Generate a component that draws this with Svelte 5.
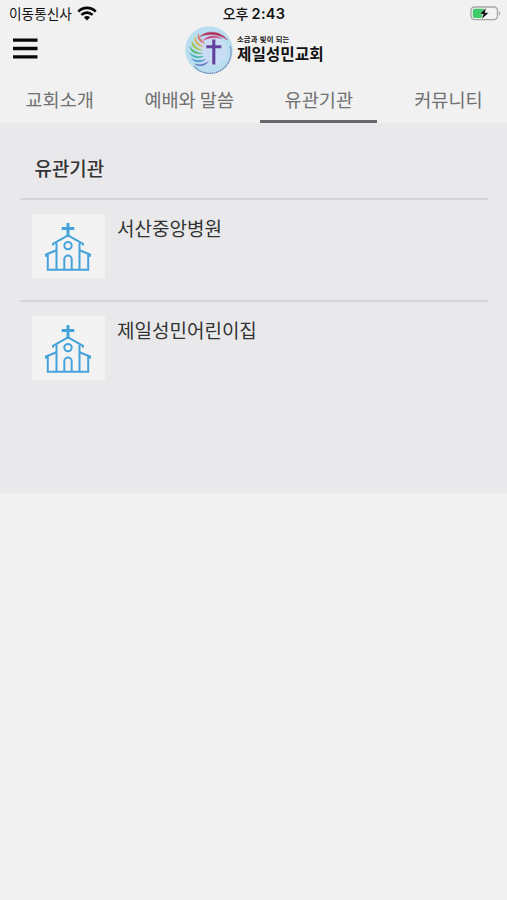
<script>
  const tabs = ['교회소개', '예배와 말씀', '유관기관', '커뮤니티'];
  const active = '유관기관';
  const places = ['서산중앙병원', '제일성민어린이집'];
  const rays = [
    { c: '#b52f5c', d: 'M15 10.500C22 4 35 4.500 42.500 14 34 8 24 7 15 10.500z' },
    { c: '#cf4a86', d: 'M18 14.500C23 9 31 9 36.500 12.500 30 11 24 11.500 18 14.500z' },
    { c: '#d9756a', d: 'M13.500 7.500C11.500 12 14 16 20 17.500 16 14 14 11.500 13.500 7.500z' },
    { c: '#dfae4c', d: 'M10 11C8.500 16 12 20 18.500 21 13.500 18 11 15 10 11z' },
    { c: '#a3c653', d: 'M7 15C6 20.500 10 24 17.500 24.500 11.500 22 8.500 19 7 15z' },
    { c: '#4fb56c', d: 'M5 20.500C5.500 26 10 28.500 17.500 27.500 11 26.500 7.500 24.500 5 20.500z' },
    { c: '#3aaea2', d: 'M4.500 26.500C6.500 31.500 12 33 18.500 30.500 12 31 8 30 4.500 26.500z' },
    { c: '#4590cb', d: 'M6.500 32.500C9.500 36.500 15.500 37 20.500 33.500 15 35 10.500 35 6.500 32.500z' },
    { c: '#5c6bb8', d: 'M10 38C14 41 20 40 23.500 35.500 19 38.500 14.500 39.500 10 38z' }
  ];
</script>

<div class="screen">
  <div class="status">
    <div class="carrier">
      <span>이동통신사</span>
      <svg width="20" height="15" viewBox="0 0 20 15">
        <g fill="none" stroke="#080808" stroke-width="2.700">
          <path d="M1.300 5.600C6.200.7 13.800.7 18.700 5.600" />
          <path d="M4.400 8.900c3.200-3.100 8-3.100 11.200 0" />
        </g>
        <path d="M6.900 11.300c1.800-1.600 4.400-1.600 6.200 0L10 14.400z" fill="#080808" />
      </svg>
    </div>
    <div class="time">오후 <b>2:43</b></div>
    <svg class="battery" width="31" height="15" viewBox="0 0 31 15">
      <rect x="1" y="1" width="26.500" height="12.600" rx="3.600" fill="#f4f4f4" stroke="#a5a5a5" stroke-width="1.300" />
      <path d="M4.800 2.700H14L11.500 12H4.800a2 2 0 0 1-2-2V4.700a2 2 0 0 1 2-2z" fill="#3dcc6a" />
      <path d="M16.200 1.700 9.700 8h3.700l-1.700 5.200L18.700 6.700h-3.800z" fill="#080808" stroke="#f4f4f4" stroke-width=".4" />
      <path d="M29 5.200v4.400c1.600-.7 1.600-3.700 0-4.400z" fill="#a5a5a5" />
    </svg>
  </div>

  <header>
    <svg class="menu" width="25" height="22" viewBox="0 0 25 22">
      <path d="M0 2.200h24.500M0 10.500h24.500M0 18.800h24.500" stroke="#080808" stroke-width="3.300" />
    </svg>
    <div class="brand">
      <svg width="48" height="48" viewBox="0 0 48 48">
        <circle cx="24" cy="24" r="23.800" fill="#b9def0" />
        <circle cx="27" cy="25" r="15" fill="#c9def4" />
        {#each rays as ray}
          <path d={ray.d} fill={ray.c} stroke={ray.c} stroke-width=".4" />
        {/each}
        <path d="M45.200 20.500A21 21 0 0 1 9.500 40.500" fill="none" stroke="#6c83b4" stroke-width="1.200" stroke-dasharray="1.600 .5" />
        <path d="M28.800 13.500v25M21.300 20.700h15" stroke="#65429d" stroke-width="3.100" />
      </svg>
      <div class="name">
        <small>소금과 빛이 되는</small>
        <strong>제일성민교회</strong>
      </div>
    </div>
  </header>

  <nav>
    {#each tabs as tab}
      <div class="tab" class:active={tab === active}>{tab}</div>
    {/each}
  </nav>

  <main>
    <h1>유관기관</h1>
    {#each places as place}
      <section>
        <div class="thumb">
          <svg width="46" height="49" viewBox="0 0 46 49" fill="none" stroke="#46a3d9" stroke-width="2">
            <path d="M23 0v14M16.700 5.400h12.600" stroke-width="3" />
            <path d="M8 22.500V20.800L23 12.500l15 8.300v1.700" />
            <path d="M11.500 20v26.800M34.500 20v26.800" />
            <path d="M11.500 27.200 1 31.500v2.200M34.500 27.200 45 31.500v2.200" />
            <path d="M2.800 31.500V46.800h40.400V31.500" />
            <circle cx="23" cy="22.600" r="3.700" />
            <path d="M19.300 46.800V36.200a3.700 3.700 0 0 1 7.400 0v10.600" />
          </svg>
        </div>
        <h2>{place}</h2>
      </section>
    {/each}
  </main>
</div>

<style>
  :global(body) {
    margin: 0;
    background: #f1f1f1;
  }
  .screen {
    height: 900px;
    overflow: hidden;
    background: #f1f1f1;
    color: #333;
    font-family: "Noto Sans CJK KR", sans-serif;
    white-space: nowrap;
  }
  .status {
    display: grid;
    grid-template-columns: 1fr auto 1fr;
    align-items: center;
    height: 26px;
    padding: 0 6px 0 9px;
    color: #111;
    line-height: 26px;
  }
  .carrier {
    display: flex;
    align-items: center;
    gap: 5px;
    font-size: 13.700px;
  }
  .carrier span {
    line-height: 24px;
    padding-bottom: 2px;
  }
  .carrier svg {
    margin-bottom: 1px;
  }
  .time {
    font-size: 14px;
    font-weight: 500;
    margin-right: 2px;
  }
  .time b {
    font-family: Inter, sans-serif;
    font-size: 14.500px;
    font-weight: 600;
    letter-spacing: 0.3px;
  }
  .battery {
    justify-self: end;
  }
  header {
    display: flex;
    align-items: center;
    height: 48px;
    padding-left: 13px;
  }
  .menu {
    margin-bottom: 2px;
  }
  .brand {
    display: flex;
    align-items: center;
    gap: 4px;
    margin-left: 147px;
  }
  .name {
    display: flex;
    flex-direction: column;
    color: #111;
    padding-bottom: 1px;
    font-family: "Liberation Sans", "Noto Sans CJK KR", sans-serif;
  }
  small {
    font-size: 7.300px;
    font-weight: 700;
    line-height: 9px;
    letter-spacing: 0.150px;
  }
  strong {
    margin-top: 1px;
    font-size: 15.700px;
    font-weight: 700;
    line-height: 19px;
  }
  nav {
    display: flex;
    gap: 12.300px;
    height: 49px;
    padding-left: 1px;
  }
  .tab {
    flex: 0 0 117.300px;
    box-sizing: border-box;
    height: 49px;
    border-bottom: 3px solid transparent;
    color: #707070;
    font-size: 18.600px;
    line-height: 50px;
    text-align: center;
  }
  .tab.active {
    border-color: #69696b;
  }
  main {
    box-sizing: border-box;
    height: 370px;
    padding: 0 19px 0 20px;
    background: #e9e9eb;
  }
  h1 {
    margin: 0;
    height: 75px;
    padding-left: 14.500px;
    font-size: 18.900px;
    font-weight: 500;
    line-height: 89px;
  }
  section {
    display: flex;
    box-sizing: border-box;
    height: 101.500px;
    padding: 14px 0 0 12px;
    border-top: 2px solid #d5d5d7;
  }
  .thumb {
    display: flex;
    justify-content: center;
    width: 73px;
    height: 64px;
    padding: 9px 1px 0 0;
    box-sizing: border-box;
    background: #f3f3f4;
  }
  h2 {
    margin: 0 0 0 12px;
    font-size: 19px;
    font-weight: 400;
    line-height: 27px;
  }
</style>
